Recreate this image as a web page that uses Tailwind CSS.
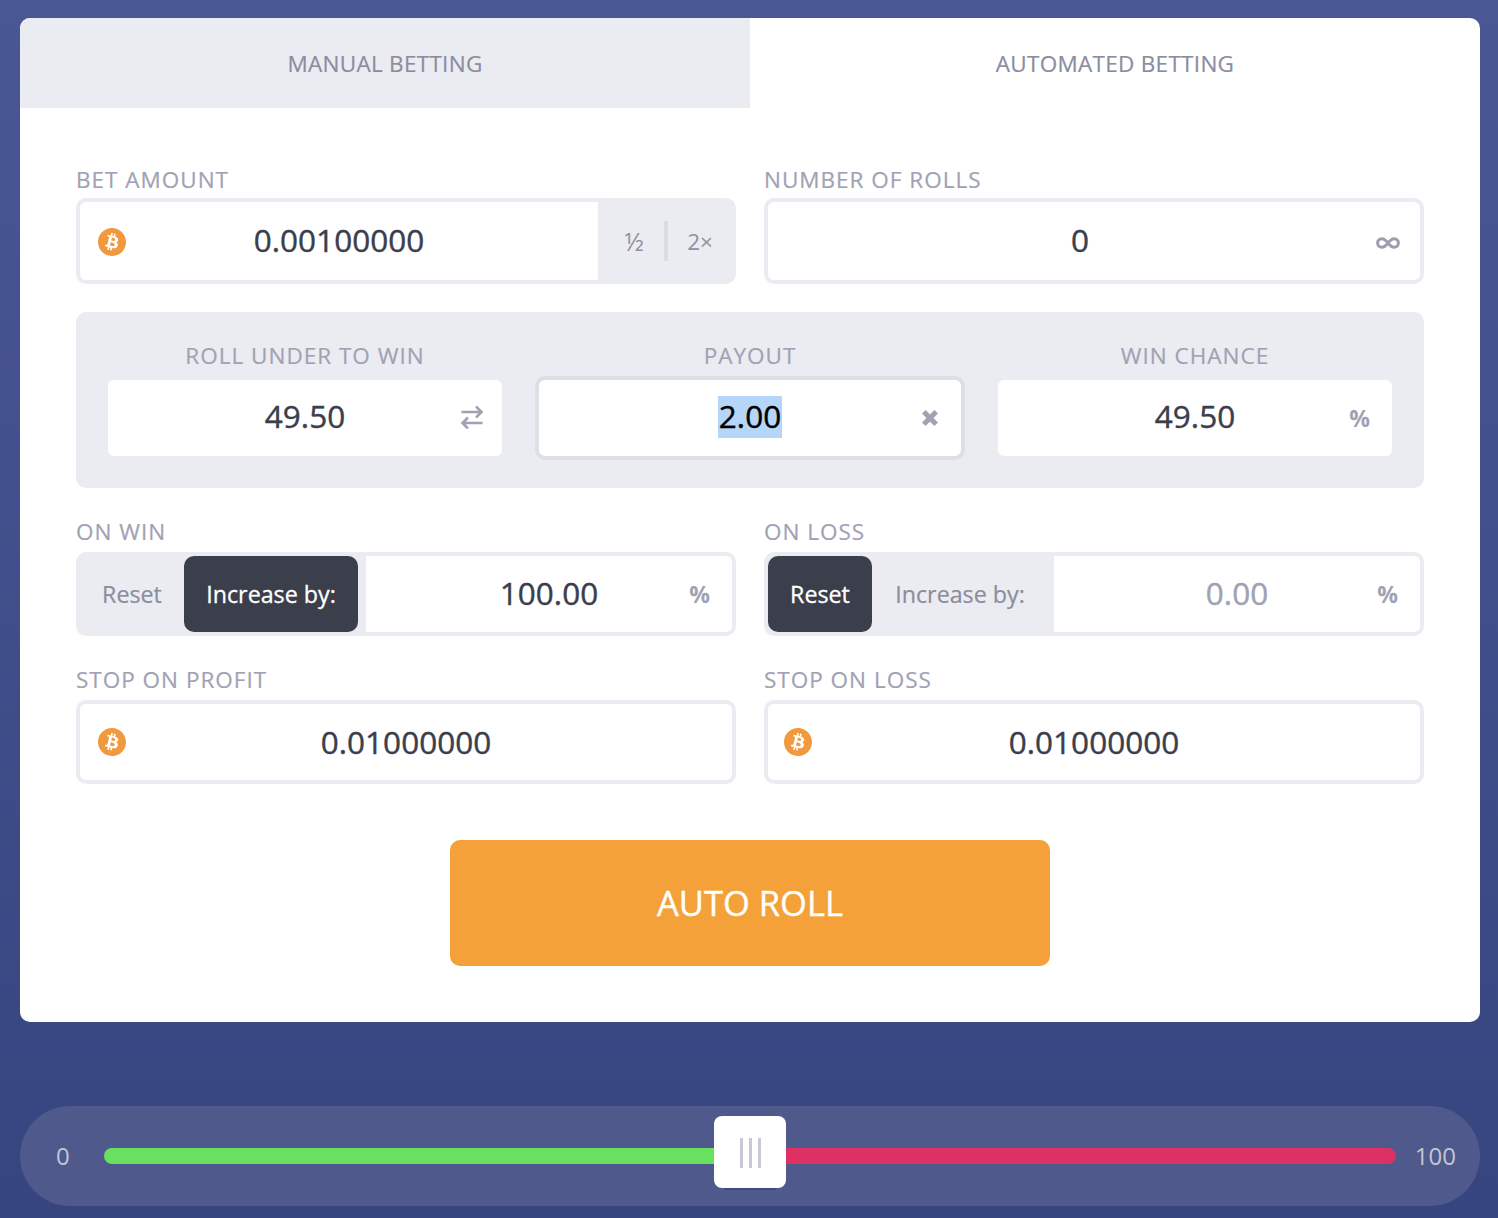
<!DOCTYPE html>
<html lang="en">
<head>
    <meta charset="UTF-8">
    <title>Automated Betting</title>
    <script src="https://cdn.jsdelivr.net/npm/@tailwindcss/browser@4"></script>
</head>
<body class="font-['Open_Sans',sans-serif] bg-gradient-to-b from-[#4a5795] to-[#364580] h-[1218px] w-[1498px] overflow-hidden pt-[18px] pl-5 pr-[18px]">
    <svg class="hidden">
        <symbol id="btc" viewBox="0 0 24 24"><path fill="#f0993e" d="M23.638 14.904c-1.602 6.43-8.113 10.34-14.542 8.736C2.67 22.05-1.244 15.525.362 9.105 1.962 2.67 8.475-1.243 14.9.358c6.43 1.605 10.342 8.115 8.738 14.548v-.002zm-6.35-4.613c.24-1.59-.974-2.45-2.64-3.03l.54-2.153-1.315-.33-.525 2.107c-.345-.087-.705-.167-1.064-.25l.526-2.127-1.32-.33-.54 2.165c-.285-.067-.565-.132-.84-.2l-1.815-.45-.35 1.407s.975.225.955.236c.535.136.63.486.615.766l-1.477 5.92c-.075.166-.24.406-.614.314.015.02-.96-.24-.96-.24l-.66 1.51 1.71.426.93.242-.54 2.19 1.32.327.54-2.17c.36.1.705.19 1.05.273l-.51 2.154 1.32.33.545-2.19c2.24.427 3.93.257 4.64-1.774.57-1.637-.03-2.58-1.217-3.196.854-.193 1.5-.76 1.68-1.93h.01zm-3.01 4.22c-.404 1.64-3.157.75-4.05.53l.72-2.9c.896.23 3.757.67 3.33 2.37zm.41-4.24c-.37 1.49-2.662.735-3.405.55l.654-2.64c.744.18 3.137.524 2.75 2.084v.006z"/></symbol>
    </svg>

    <!-- Betting card -->
    <div class="bg-white rounded-[10px] overflow-hidden h-[1004px]">
        <div class="flex h-[90px] text-[22.5px] tracking-[0.3px] text-[#8b8d9f] [-webkit-text-stroke:0.2px]">
            <div class="w-1/2 bg-[#ebecf1] flex items-center justify-center pt-0.5">MANUAL BETTING</div>
            <div class="w-1/2 flex items-center justify-center pt-0.5">AUTOMATED BETTING</div>
        </div>

        <div class="px-14 pt-[56px]">
            <!-- Bet amount / rolls -->
            <div class="grid grid-cols-2 gap-x-7">
                <div>
                    <div class="h-[34px] text-[22.5px] tracking-[1px] leading-[32px] text-[#a0a2b3] [-webkit-text-stroke:0.2px]">BET AMOUNT</div>
                    <div class="h-[86px] bg-[#ebecf1] rounded-[10px] p-1 flex">
                        <div class="relative w-[518px] bg-white rounded-l-[6px] flex items-center justify-center pb-0.5 text-[31.5px] text-[#3b3e4b] [-webkit-text-stroke:0.4px]">
                            <svg class="absolute left-[18px] top-[26px] w-7 h-7"><use href="#btc"/></svg>
                            0.00100000
                        </div>
                        <div class="flex-1 flex items-center text-[#8f91a3]">
                            <span class="w-[66px] pl-[6px] pt-0.5 text-center text-[25px]">½</span>
                            <span class="w-1 h-10 bg-[#dcdde4]"></span>
                            <span class="flex-1 pt-0.5 text-center text-[22.5px]">2×</span>
                        </div>
                    </div>
                </div>
                <div>
                    <div class="h-[34px] text-[22.5px] tracking-[1px] leading-[32px] text-[#a0a2b3] [-webkit-text-stroke:0.2px]">NUMBER OF ROLLS</div>
                    <div class="relative h-[86px] border-4 border-[#ebecf1] rounded-[10px] flex items-center justify-center pr-7 pb-0.5 text-[31.5px] text-[#3b3e4b] [-webkit-text-stroke:0.4px]">
                        0
                        <svg class="absolute right-[20px] top-[35px] w-6 h-3" viewBox="0 0 24 12" fill="none" stroke="#9c9eb0" stroke-width="3"><path d="M12 6C9.5 2.8 7.8 1.7 5.8 1.7 3.3 1.7 1.6 3.6 1.6 6s1.700 4.300 4.200 4.300c2 0 3.700-1.100 6.200-4.300 2.500-3.200 4.200-4.300 6.200-4.300 2.500 0 4.200 1.900 4.200 4.300s-1.700 4.300-4.200 4.300c-2 0-3.700-1.100-6.200-4.300z"/></svg>
                    </div>
                </div>
            </div>

            <!-- Roll settings -->
            <div class="mt-7 h-[176px] bg-[#ebecf1] rounded-[10px] px-8 pt-4 flex gap-[33px]">
                <div class="w-[394px]">
                    <div class="h-[52px] text-[22.5px] tracking-[1px] leading-[56px] text-center text-[#a0a2b3] [-webkit-text-stroke:0.2px]">ROLL UNDER TO WIN</div>
                    <div class="relative h-[76px] bg-white rounded-[6px] flex items-center justify-center pb-1 text-[31.5px] text-[#3b3e4b] [-webkit-text-stroke:0.4px]">
                        49.50
                        <svg class="absolute right-[18px] top-[25px] w-6 h-6" viewBox="0 0 24 24" fill="none" stroke="#a0a2b3" stroke-width="2.600"><path d="M1.500 7h20M16 1.500l5.500 5.500-5.500 5.500M22.500 18h-20M8 12.500 2.500 18 8 23.500"/></svg>
                    </div>
                </div>
                <div class="w-[430px]">
                    <div class="h-[48px] text-[22.5px] tracking-[1px] leading-[56px] text-center text-[#a0a2b3] [-webkit-text-stroke:0.2px]">PAYOUT</div>
                    <div class="relative h-[84px] bg-white border-4 border-[#dedfe6] rounded-[10px] flex items-center justify-center text-[31.5px] text-black [-webkit-text-stroke:0.4px]">
                        <span class="bg-[#b5d5f9] h-[42px] leading-[39px] mb-0.5 w-16 text-center">2.00</span>
                        <svg class="absolute right-[22px] top-[29px] w-[18px] h-[18px]" viewBox="0 0 16 16" fill="none" stroke="#a0a2b3" stroke-width="4.500"><path d="m2.500 2.500 11 11M13.500 2.500l-11 11"/></svg>
                    </div>
                </div>
                <div class="w-[394px]">
                    <div class="h-[52px] text-[22.5px] tracking-[1px] leading-[56px] text-center text-[#a0a2b3] [-webkit-text-stroke:0.2px]">WIN CHANCE</div>
                    <div class="relative h-[76px] bg-white rounded-[6px] flex items-center justify-center pb-1 text-[31.5px] text-[#3b3e4b] [-webkit-text-stroke:0.4px]">
                        49.50
                        <span class="absolute right-[22px] top-[21px] text-[23px] font-bold text-[#a0a2b3] [-webkit-text-stroke:0]">%</span>
                    </div>
                </div>
            </div>

            <!-- On win / on loss -->
            <div class="mt-[26px] grid grid-cols-2 gap-x-7">
                <div>
                    <div class="h-[38px] text-[22.5px] tracking-[1px] leading-[36px] text-[#a0a2b3] [-webkit-text-stroke:0.2px]">ON WIN</div>
                    <div class="h-[84px] bg-[#ebecf1] rounded-[10px] p-1 flex text-[23.25px]">
                        <div class="w-[104px] flex items-center justify-center text-[#8b8d9f] [-webkit-text-stroke:0.2px]">Reset</div>
                        <div class="w-[174px] rounded-[10px] bg-[#3b3e4b] text-white flex items-center justify-center [-webkit-text-stroke:0.3px]">Increase by:</div>
                        <div class="relative ml-2 flex-1 bg-white rounded-r-[6px] flex items-center justify-center pb-0.5 text-[31.5px] text-[#3b3e4b] [-webkit-text-stroke:0.4px]">
                            100.00
                            <span class="absolute right-[22px] top-[21px] text-[23px] font-bold text-[#a0a2b3] [-webkit-text-stroke:0]">%</span>
                        </div>
                    </div>
                </div>
                <div>
                    <div class="h-[38px] text-[22.5px] tracking-[1px] leading-[36px] text-[#a0a2b3] [-webkit-text-stroke:0.2px]">ON LOSS</div>
                    <div class="h-[84px] bg-[#ebecf1] rounded-[10px] p-1 flex text-[23.25px]">
                        <div class="w-[104px] rounded-[10px] bg-[#3b3e4b] text-white flex items-center justify-center [-webkit-text-stroke:0.3px]">Reset</div>
                        <div class="w-[176px] flex items-center justify-center text-[#8b8d9f] [-webkit-text-stroke:0.2px]">Increase by:</div>
                        <div class="relative ml-[6px] flex-1 bg-white rounded-r-[6px] flex items-center justify-center pb-0.5 text-[31.5px] text-[#a0a2b3] [-webkit-text-stroke:0.4px]">
                            0.00
                            <span class="absolute right-[22px] top-[21px] text-[23px] font-bold text-[#a0a2b3] [-webkit-text-stroke:0]">%</span>
                        </div>
                    </div>
                </div>
            </div>

            <!-- Stop conditions -->
            <div class="mt-[26px] grid grid-cols-2 gap-x-7">
                <div>
                    <div class="h-[38px] text-[22.5px] tracking-[1px] leading-[36px] text-[#a0a2b3] [-webkit-text-stroke:0.2px]">STOP ON PROFIT</div>
                    <div class="relative h-[84px] border-4 border-[#ebecf1] rounded-[10px] flex items-center justify-center text-[31.5px] text-[#3b3e4b] [-webkit-text-stroke:0.4px]">
                        <svg class="absolute left-[18px] top-[24px] w-7 h-7"><use href="#btc"/></svg>
                        0.01000000
                    </div>
                </div>
                <div>
                    <div class="h-[38px] text-[22.5px] tracking-[1px] leading-[36px] text-[#a0a2b3] [-webkit-text-stroke:0.2px]">STOP ON LOSS</div>
                    <div class="relative h-[84px] border-4 border-[#ebecf1] rounded-[10px] flex items-center justify-center text-[31.5px] text-[#3b3e4b] [-webkit-text-stroke:0.4px]">
                        <svg class="absolute left-[16px] top-[24px] w-7 h-7"><use href="#btc"/></svg>
                        0.01000000
                    </div>
                </div>
            </div>

            <button class="block mx-auto mt-14 w-[600px] h-[126px] rounded-[10px] bg-[#f4a139] text-white text-[34.5px] [-webkit-text-stroke:0.4px]">AUTO ROLL</button>
        </div>
    </div>

    <!-- Range slider -->
    <div class="mt-[84px] h-[100px] rounded-full bg-[#50598c] flex items-center pl-[36px] pr-[24px] text-[24px] text-[#c3c5d3]">
        <span class="w-[48px]">0</span>
        <div class="relative flex-1 h-4 rounded-full flex">
            <div class="w-1/2 bg-[#68e160] rounded-l-full"></div>
            <div class="w-1/2 bg-[#de3163] rounded-r-full"></div>
            <div class="absolute left-[610px] top-[-32px] w-[72px] h-[72px] bg-white rounded-[8px] shadow-[0_12px_0_-10px_#3d4a85] flex items-center justify-center gap-[6px] pt-0.5 pl-px">
                <span class="w-[3px] h-[30px] bg-[#c8c9d4]"></span>
                <span class="w-[3px] h-[30px] bg-[#c8c9d4]"></span>
                <span class="w-[3px] h-[30px] bg-[#c8c9d4]"></span>
            </div>
        </div>
        <span class="w-[60px] text-right">100</span>
    </div>
</body>
</html>
